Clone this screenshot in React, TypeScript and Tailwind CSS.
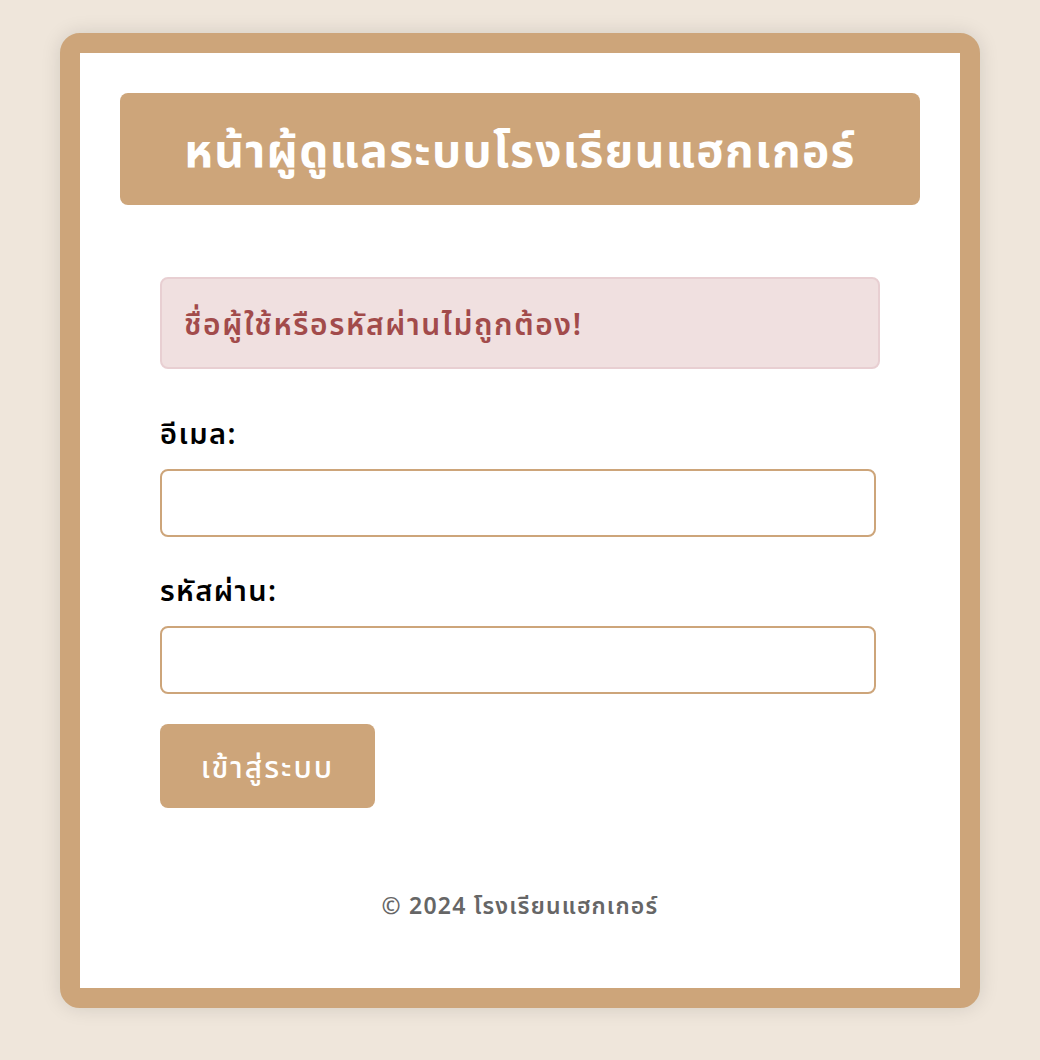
import React from "react";

export default function App() {
  return (
    <div
      className="min-h-[1060px] w-full bg-[#efe6db] pt-[33px] px-[60px]"
      style={{ fontFamily: '"Noto Sans", "Noto Sans Thai", "Liberation Sans", sans-serif' }}
    >
      <div className="w-[920px] rounded-[20px] border-[20px] border-[#cda57a] bg-white px-[40px] pt-[40px] pb-[65px] shadow-[0_0_20px_rgba(0,0,0,0.12)]">
        <div className="flex h-[112px] items-center justify-center rounded-[8px] bg-[#cda57a]">
          <h1 className="text-[46px] font-bold tracking-[1.3px] text-white">หน้าผู้ดูแลระบบโรงเรียนแฮกเกอร์</h1>
        </div>
        <div className="px-[40px] pt-[72px]">
          <div className="flex h-[92px] items-center rounded-[8px] border-2 border-[#e8cfd2] bg-[#f0e0e0] px-[22px]">
            <span className="text-[30px] font-semibold tracking-[1.6px] text-[#a24b4b]">ชื่อผู้ใช้หรือรหัสผ่านไม่ถูกต้อง!</span>
          </div>
          <div className="mt-[40px] text-[29px] font-semibold leading-[48px] tracking-[1.4px] text-black">อีเมล:</div>
          <input className="mt-[12px] block h-[68px] w-[716px] rounded-[8px] border-2 border-[#cda57a] bg-white px-3 outline-none" />
          <div className="mt-[29px] text-[29px] font-semibold leading-[48px] tracking-[1.4px] text-black">รหัสผ่าน:</div>
          <input type="password" className="mt-[12px] block h-[68px] w-[716px] rounded-[8px] border-2 border-[#cda57a] bg-white px-3 outline-none" />
          <button className="mt-[30px] flex h-[84px] w-[215px] items-center justify-center rounded-[8px] bg-[#cda57a] text-[30px] font-medium tracking-[2px] text-white">
            เข้าสู่ระบบ
          </button>
          <div className="mt-[80px] text-center text-[23px] font-semibold tracking-[1.2px] text-[#666666]">© 2024 โรงเรียนแฮกเกอร์</div>
        </div>
      </div>
    </div>
  );
}
